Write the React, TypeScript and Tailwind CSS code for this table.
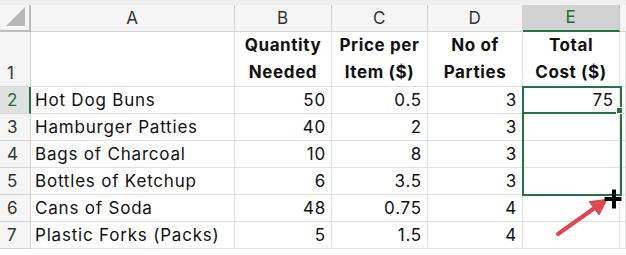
import React from "react";

const rows = [
  { n: 2, item: "Hot Dog Buns", qty: "50", price: "0.5", parties: "3", total: "75" },
  { n: 3, item: "Hamburger Patties", qty: "40", price: "2", parties: "3", total: "" },
  { n: 4, item: "Bags of Charcoal", qty: "10", price: "8", parties: "3", total: "" },
  { n: 5, item: "Bottles of Ketchup", qty: "6", price: "3.5", parties: "3", total: "" },
  { n: 6, item: "Cans of Soda", qty: "48", price: "0.75", parties: "4", total: "" },
  { n: 7, item: "Plastic Forks (Packs)", qty: "5", price: "1.5", parties: "4", total: "" },
];

const headers = ["A", "B", "C", "D", "E"];

const cell = "border-r border-b border-[#e1e1e1] bg-white";
const rowHead = "border-r border-b border-[#d4d4d4] bg-[#f5f5f5] pl-[7px] text-[#333] flex items-end pb-[2px]";

export default function App() {
  return (
    <div
      className="relative w-[626px] h-[255px] overflow-hidden bg-white text-[17px] leading-[22px] tracking-[0.8px] text-[#111]"
      style={{ fontFamily: "Inter, 'Liberation Sans', sans-serif" }}
    >
      <div className="grid grid-cols-[31px_204px_97px_96px_95px_97px_1fr] grid-rows-[5px_27px_55px_27px_27px_27px_27px_27px_27px_1fr]">
        {/* top strip */}
        <div className="col-span-7 bg-[#efefef]" />

        {/* column headers */}
        <div className="relative border-r-2 border-b-2 border-[#bdbdbd] bg-[#f5f5f5]">
          <div className="absolute right-[4px] bottom-[4px] w-0 h-0 border-l-[19px] border-l-transparent border-b-[19px] border-b-[#b8b8b8]" />
        </div>
        {headers.map((h) =>
          h === "E" ? (
            <div
              key={h}
              className="flex items-end justify-center pb-[2px] bg-[#d2d2d2] border-r border-[#c6c6c6] border-b-2 border-b-[#217346] text-[#1e6b41]"
            >
              {h}
            </div>
          ) : (
            <div
              key={h}
              className="flex items-end justify-center pb-[2px] bg-[#f5f5f5] border-r border-b border-[#d4d4d4] text-[#333]"
            >
              {h}
            </div>
          )
        )}
        <div className="bg-[#f5f5f5] border-b border-[#d4d4d4]" />

        {/* row 1 */}
        <div className={rowHead}>1</div>
        <div className={cell} />
        {[
          ["Quantity", "Needed"],
          ["Price per", "Item ($)"],
          ["No of", "Parties"],
          ["Total", "Cost ($)"],
        ].map(([a, b]) => (
          <div key={a} className={`${cell} flex flex-col items-center justify-end font-bold leading-[27px] tracking-[0.6px]`}>
            <span>{a}</span>
            <span>{b}</span>
          </div>
        ))}
        <div className={cell} />

        {rows.map((r) => (
          <React.Fragment key={r.n}>
            {r.n === 2 ? (
              <div className="border-r-2 border-r-[#217346] border-b border-[#d4d4d4] bg-[#e0e0e0] pl-[7px] text-[#1e6b41] flex items-end pb-[2px]">
                {r.n}
              </div>
            ) : (
              <div className={rowHead}>{r.n}</div>
            )}
            <div className={`${cell} flex items-end pb-[2px] pl-[4px]`}>{r.item}</div>
            <div className={`${cell} flex items-end justify-end pb-[2px] pr-[5px]`}>{r.qty}</div>
            <div className={`${cell} flex items-end justify-end pb-[2px] pr-[5px]`}>{r.price}</div>
            <div className={`${cell} flex items-end justify-end pb-[2px] pr-[5px]`}>{r.parties}</div>
            <div className={`${cell} flex items-end justify-end pb-[2px] pr-[5px]`}>{r.total}</div>
            <div className={cell} />
          </React.Fragment>
        ))}

        {/* trailing partial row */}
        <div className="border-r border-[#d4d4d4] bg-[#f5f5f5]" />
        <div className="col-span-6 bg-white" />
      </div>

      {/* selection overlays */}
      <div className="absolute left-[522px] top-[86px] w-[100px] h-[110px] border-2 border-[#217346]" />
      <div className="absolute left-[522px] top-[86px] w-[100px] h-[28px] border-2 border-[#217346]" />
      <div className="absolute left-[617px] top-[108px] w-[5px] h-[5px] bg-[#217346] outline outline-1 outline-white" />

      {/* arrow + cursor */}
      <svg className="absolute left-0 top-0" width="626" height="255" viewBox="0 0 626 255">
        <line x1="558" y1="234" x2="596" y2="207" stroke="#e0484d" strokeWidth="4" strokeLinecap="round" />
        <polygon points="606,200 590,202 599,214" fill="#e0484d" stroke="#e0484d" strokeWidth="2" strokeLinejoin="round" />
        <rect x="604.5" y="197" width="17" height="4" fill="#000" />
        <rect x="612" y="189.5" width="4" height="19" fill="#000" />
      </svg>
    </div>
  );
}
